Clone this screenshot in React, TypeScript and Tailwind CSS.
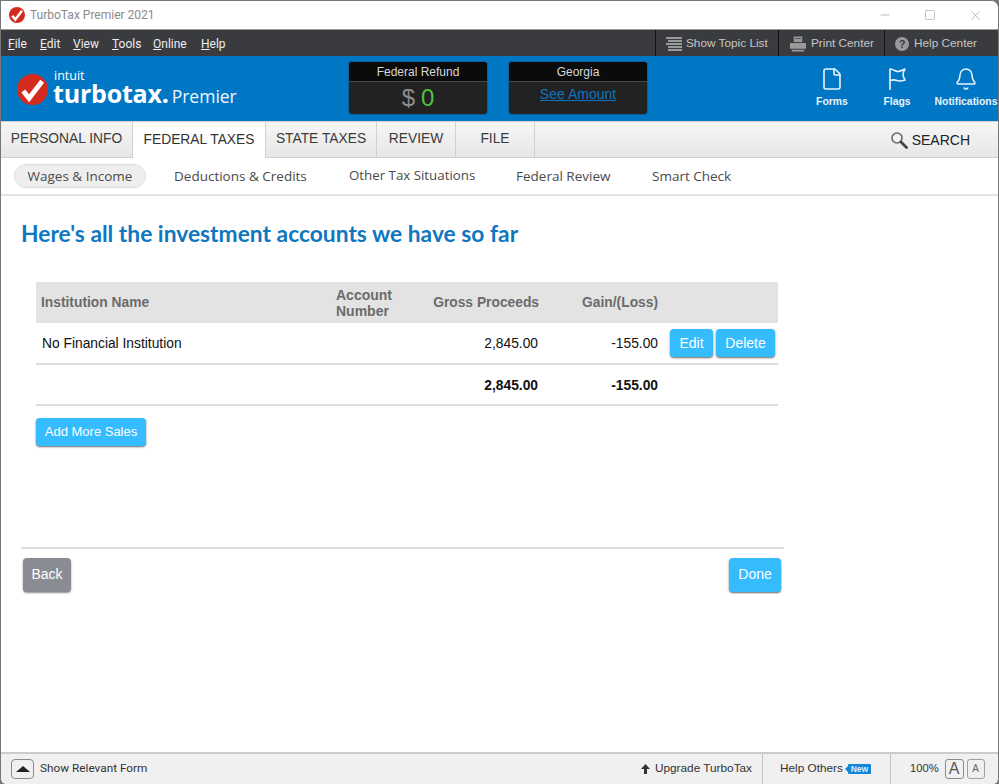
import React from "react";
import { Bell, File, Minus, Square, X } from "lucide-react";

const menus = [
  { first: "F", rest: "ile", width: "w-[32px]" },
  { first: "E", rest: "dit", width: "w-[33px]" },
  { first: "V", rest: "iew", width: "w-[39px]" },
  { first: "T", rest: "ools", width: "w-[41px]" },
  { first: "O", rest: "nline", width: "w-[48px]" },
  { first: "H", rest: "elp", width: "w-[30px]" },
];

const tabs = [
  { label: "PERSONAL INFO", width: "w-[132px]" },
  { label: "FEDERAL TAXES", width: "w-[133px]", active: true },
  { label: "STATE TAXES", width: "w-[111px]" },
  { label: "REVIEW", width: "w-[79px]" },
  { label: "FILE", width: "w-[79px]" },
];

function CheckLogo({ size, className }: { size: number; className?: string }) {
  return (
    <svg width={size} height={size} viewBox="0 0 32 32" className={`shrink-0 ${className ?? ""}`}>
      <circle cx="16" cy="16" r="16" fill="#d52b1e" />
      <path d="M6.5 17.5l6 7.5L26 7.5" fill="none" stroke="#fff" strokeWidth="5" />
    </svg>
  );
}

function BalanceBox({ title, children }: { title: string; children: React.ReactNode }) {
  return (
    <div className="-mt-[1px] flex h-[54px] w-[140px] flex-col overflow-hidden rounded-[4px] border border-[#0a5f9c] bg-[#222222]">
      <div className="flex h-[20px] items-center justify-center border-b border-[#4a4a4a] bg-[#0b0b0b] text-[12px] text-[#d8d8d8]">
        {title}
      </div>
      <div className="flex flex-1 items-center justify-center">{children}</div>
    </div>
  );
}

function HeaderIcon({ label, className, children }: { label: string; className: string; children: React.ReactNode }) {
  return (
    <div className={`flex flex-col items-center ${className}`}>
      <div className="flex h-[26px] items-center text-[#e8f3fb]">{children}</div>
      <span className="mt-[3px] text-[10.400px] font-bold leading-[14px] text-[#e8f3fb]">{label}</span>
    </div>
  );
}

function BlueButton({ label, className }: { label: string; className: string }) {
  return (
    <button className={`rounded-[4px] bg-[#35bcff] text-white shadow-[0_1px_2px_rgba(0,0,0,0.6)] ${className}`}>
      {label}
    </button>
  );
}

export default function App() {
  return (
    <div className="h-[784px] w-[999px] overflow-hidden bg-[#777777] font-['Liberation_Sans',sans-serif]">
      <div className="flex h-[784px] flex-col overflow-hidden rounded-tr-[8px] rounded-b-[6px] border-t border-x border-[#777777] bg-white">
        {/* title bar */}
        <div className="flex h-[29px] items-center justify-between border-b border-[#999999] bg-white pl-[8px]">
          <div className="flex items-center gap-[5px]">
            <CheckLogo size={16} />
            <span className="font-['Roboto',sans-serif] text-[12px] text-[#8a8a8a]">TurboTax Premier 2021</span>
          </div>
          <div className="flex items-center text-[#8c8c8c]">
            <Minus size={14} strokeWidth={1} className="mr-[32px]" />
            <Square size={12} strokeWidth={1} className="mr-[32px]" />
            <X size={15} strokeWidth={1} className="mr-[15px]" />
          </div>
        </div>

        {/* menu bar */}
        <div className="flex h-[26px] items-center justify-between bg-[#3a3b3f] pl-[7px]">
          <div className="flex pt-[2px] font-['Roboto',sans-serif] text-[12px] text-[#eeeeee]">
            {menus.map((m) => (
              <span key={m.first} className={m.width}>
                <span className="underline">{m.first}</span>
                {m.rest}
              </span>
            ))}
          </div>
          <div className="flex h-full text-[11.800px] text-[#c6c6c6]">
            <div className="flex w-[123px] items-center border-l border-[#111111] pl-[10px] pt-[2px]">
              <svg width="16" height="14" viewBox="0 0 16 14" fill="#9a9a9a" className="mr-[4px]">
                <rect x="0" y="0" width="16" height="2" />
                <rect x="2" y="3" width="14" height="2" />
                <rect x="0" y="6" width="16" height="2" />
                <rect x="2" y="9" width="14" height="2" />
                <rect x="2" y="12" width="14" height="2" />
              </svg>
              Show Topic List
            </div>
            <div className="flex w-[106px] items-center border-l border-[#111111] pl-[11px] pt-[2px]">
              <svg width="16" height="16" viewBox="0 0 17 16" fill="#9a9a9a" className="mr-[5px]">
                <path d="M4 0h9v6H4zM5.500 1.500v1h6v-1zM1 7h15a1 1 0 0 1 1 1v5H0V8a1 1 0 0 1 1-1zM2 14h13v2H2z" fillRule="evenodd" />
              </svg>
              Print Center
            </div>
            <div className="flex w-[114px] items-center border-l border-[#111111] pl-[10px] pt-[2px]">
              <span className="mr-[5px] flex h-[14px] w-[14px] items-center justify-center rounded-full bg-[#9a9a9a] text-[11px] font-bold leading-none text-[#3a3b3f]">
                ?
              </span>
              Help Center
            </div>
          </div>
        </div>

        {/* blue header */}
        <div className="flex h-[65px] items-center justify-between bg-[#0077c5] pl-[16px]">
          <div className="flex w-[331px] items-center">
            <CheckLogo size={31} className="mt-[2px]" />
            <div className="-mt-[1px] ml-[5px] flex flex-col text-white">
              <span className="mt-[4px] h-[6px] pl-[1px] font-['Open_Sans',sans-serif] text-[12.500px] font-normal leading-[6px]">intuit</span>
              <span className="h-[28px] font-['Open_Sans',sans-serif] text-[25px] font-bold leading-[28px] tracking-[-0.2px]">turbotax.</span>
            </div>
            <span className="ml-[3px] mt-[16px] font-['Open_Sans',sans-serif] text-[17.500px] text-[#f0f7fc]">Premier</span>
          </div>
          <div className="flex gap-[20px]">
            <BalanceBox title="Federal Refund">
              <span className="text-[24px] leading-none text-[#8c8c8c]">$</span>
              <span className="ml-[6px] text-[24px] leading-none text-[#4fc13f]">0</span>
            </BalanceBox>
            <BalanceBox title="Georgia">
              <span className="-mt-[7px] text-[14px] text-[#0d74c0] underline">See Amount</span>
            </BalanceBox>
          </div>
          <div className="ml-auto flex mb-[2px]">
            <HeaderIcon label="Forms" className="w-[64px]">
              <File size={24} strokeWidth={1.6} />
            </HeaderIcon>
            <HeaderIcon label="Flags" className="w-[66px]">
              <svg width="24" height="24" viewBox="0 0 24 24" fill="none" stroke="currentColor" strokeWidth="1.6" strokeLinejoin="round">
                <path d="M5 23V2c3 0 5 2 7 2.500s5-1 8-2.500c-1 2-2 3.500-2 5.500s1 3.500 2 5.500c-3 1-5 1.500-8 .5s-4-1-7 0" />
              </svg>
            </HeaderIcon>
            <HeaderIcon label="Notifications" className="ml-[4px] w-[64px]">
              <Bell size={24} strokeWidth={1.5} />
            </HeaderIcon>
          </div>
        </div>

        {/* tabs */}
        <div className="flex h-[37px] items-stretch justify-between border-y border-[#cfcfcf] bg-gradient-to-b from-[#f6f6f6] to-[#e7e7e7]">
          <div className="flex">
            {tabs.map((t) => (
              <div
                key={t.label}
                className={`flex items-center justify-center border-r border-[#d0d0d0] text-[13.800px] ${t.width} ${
                  t.active ? "-mb-px bg-white text-[#333333]" : "text-[#3c3c3c]"
                }`}
              >
                {t.label}
              </div>
            ))}
          </div>
          <div className="flex items-center pr-[28px] pt-[1px] text-[14px] text-[#222222]">
            <svg width="18" height="18" viewBox="0 0 18 18" className="mr-[4px]">
              <circle cx="7" cy="7" r="5" fill="#f4f4f4" stroke="#666666" strokeWidth="1.6" />
              <path d="M11 11l5.500 5.500" stroke="#444444" strokeWidth="2.800" strokeLinecap="round" />
            </svg>
            SEARCH
          </div>
        </div>

        {/* sub nav */}
        <div className="flex h-[38px] items-center border-b-2 border-[#e3e3e3] pl-[13px] font-['Open_Sans',sans-serif] text-[13.500px] text-[#4a4a4a]">
          <span className="flex h-[24px] w-[132px] items-center justify-center rounded-full border border-[#dddddd] bg-[#eeeeee]">
            Wages &amp; Income
          </span>
          <span className="ml-[28px] w-[175px]">Deductions &amp; Credits</span>
          <span className="w-[167px] text-[13.300px]">Other Tax Situations</span>
          <span className="w-[136px]">Federal Review</span>
          <span>Smart Check</span>
        </div>

        {/* content */}
        <div className="flex-1 pl-[20px]">
          <h1 className="mt-[21px] font-['Lato',sans-serif] text-[22.800px] font-bold leading-[32px] text-[#0f77bf]">
            Here's all the investment accounts we have so far
          </h1>

          <div className="ml-[15px] mt-[33px] w-[742px]">
            <div className="grid h-[41px] grid-cols-[300px_90px_113px_119px_120px] items-center bg-[#e3e3e3] text-[13.800px] font-bold text-[#6b6b6b]">
              <span className="pl-[5px] pt-[2px]">Institution Name</span>
              <span className="text-[14px] leading-[16px]">
                Account
                <br />
                Number
              </span>
              <span className="pt-[2px] text-right">Gross Proceeds</span>
              <span className="pt-[2px] text-right">Gain/(Loss)</span>
              <span />
            </div>
            <div className="grid h-[42px] grid-cols-[300px_90px_112px_120px_120px] items-center border-b-2 border-[#dddddd] text-[13.800px] text-[#111111]">
              <span className="pl-[6px] pt-[2px]">No Financial Institution</span>
              <span />
              <span className="pt-[2px] text-right">2,845.00</span>
              <span className="pt-[2px] text-right">-155.00</span>
              <span className="flex gap-[3px] pl-[12px]">
                <BlueButton label="Edit" className="h-[28px] w-[43px] text-[14px]" />
                <BlueButton label="Delete" className="h-[28px] w-[59px] text-[14px]" />
              </span>
            </div>
            <div className="grid h-[41px] grid-cols-[300px_90px_112px_120px_120px] items-center border-b-2 border-[#dddddd] pt-[3px] text-[13.800px] font-bold text-[#111111]">
              <span />
              <span />
              <span className="text-right">2,845.00</span>
              <span className="text-right">-155.00</span>
              <span />
            </div>
            <BlueButton label="Add More Sales" className="mt-[12px] h-[28px] w-[110px] text-[13px]" />
          </div>

          <div className="mt-[101px] w-[763px]">
            <div className="h-[2px] bg-[#dddddd]" />
            <div className="mt-[9px] flex justify-between pl-[2px] pr-[3px]">
              <button className="h-[34px] w-[48px] rounded-[4px] bg-[#8a8c94] pb-[2px] text-[14px] text-white shadow-[0_1px_2px_rgba(0,0,0,0.45)]">
                Back
              </button>
              <BlueButton label="Done" className="h-[34px] w-[52px] pb-[1px] text-[14px]" />
            </div>
          </div>
        </div>

        {/* status bar */}
        <div className="flex h-[32px] items-center justify-between border-t-2 border-[#cccccc] bg-[#f0f0f0] pb-[1px] pl-[10px] text-[11.800px] text-[#333333]">
          <div className="flex items-center">
            <span className="flex h-[20px] w-[23px] items-center justify-center rounded-[4px] border border-[#8a8a8a]">
              <span className="h-0 w-0 border-x-[7px] border-b-[6px] border-x-transparent border-b-[#222222]" />
            </span>
            <span className="ml-[6px] font-['Roboto',sans-serif] text-[11.800px]">Show Relevant Form</span>
          </div>
          <div className="flex h-full items-center">
            <svg width="9" height="10" viewBox="0 0 9 10" fill="#333333" className="mr-[5px]">
              <path d="M4.500 0L9 5H6v5H3V5H0z" />
            </svg>
            <span className="mr-[10px]">Upgrade TurboTax</span>
            <div className="-mb-[1px] flex h-[30px] w-[129px] items-center border-x border-[#c4c4c4] pb-[1px] pl-[17px]">
              Help Others
              <span className="relative ml-[5px] w-[23px] rounded-[1px] bg-[#0f86d6] text-center text-[8.500px] font-bold leading-[10px] text-[#d6efff]">
                New
                <span className="absolute -left-[3px] top-[2px] h-0 w-0 border-y-[3px] border-r-[3px] border-y-transparent border-r-[#0f86d6]" />
              </span>
            </div>
            <div className="flex w-[107px] items-center pl-[19px] text-[11.200px]">
              100%
              <span className="ml-[6px] flex h-[20px] w-[19px] items-center justify-center rounded-[3px] border border-[#8a8a8a] text-[16px] leading-none text-[#555555]">A</span>
              <span className="ml-[3px] flex h-[20px] w-[18px] items-center justify-center rounded-[3px] border border-[#a0a0a0] text-[10px] leading-none text-[#666666]">A</span>
            </div>
          </div>
        </div>
      </div>
    </div>
  );
}
